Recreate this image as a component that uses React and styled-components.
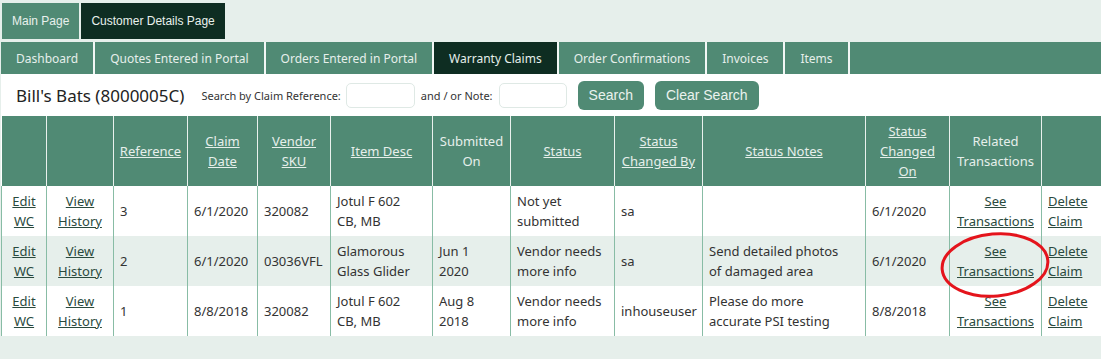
import React from 'react';
import styled, { createGlobalStyle } from 'styled-components';

const GlobalStyle = createGlobalStyle`
  body {
    margin: 0;
    background: #e6efeb;
    font-family: "Noto Sans", sans-serif;
    color: #333;
  }
`;

const Page = styled.div`
  padding: 3px 0 0 1px;
`;

const TopTabs = styled.div`
  display: flex;
  gap: 2px;
  padding-left: 1px;
`;

const TopTab = styled.a`
  display: flex;
  align-items: center;
  height: 36px;
  padding: 0 10px;
  font-family: "Liberation Sans", Arial, sans-serif;
  font-size: 12px;
  color: #e9f1ed;
  text-decoration: none;
  background: ${({ $active }) => ($active ? '#0e2d22' : '#508a74')};
`;

const NavBar = styled.div`
  display: flex;
  height: 32px;
  margin-top: 3px;
  background: #508a74;
`;

const NavTab = styled.a`
  display: flex;
  align-items: center;
  padding: 0 15px;
  border-right: 2px solid #f2f7f5;
  font-size: 12px;
  color: #e6efeb;
  text-decoration: none;
  background: ${({ $active }) => ($active ? '#0e2d22' : 'transparent')};
`;

const Content = styled.div`
  background: #fff;
`;

const SearchRow = styled.div`
  display: flex;
  align-items: center;
  height: 42px;
  padding-left: 15px;
`;

const Title = styled.h4`
  margin: 0 17px 0 0;
  font-size: 17px;
  font-weight: 400;
  color: #222;
`;

const Label = styled.span`
  font-size: 11px;
  color: #333;
  margin-left: ${({ $gap }) => $gap || 0}px;
`;

const Input = styled.input`
  box-sizing: border-box;
  width: ${({ $w }) => $w}px;
  height: 25px;
  margin-left: ${({ $gap }) => $gap}px;
  border: 1px solid #dfe9e5;
  border-radius: 5px;
  background: #fff;
  outline: none;
`;

const Button = styled.button`
  height: 29px;
  margin-left: 11px;
  padding: 0 11px;
  border: none;
  border-radius: 6px;
  background: #508a74;
  color: #eaf2ee;
  font-family: "Liberation Sans", Arial, sans-serif;
  font-size: 14px;
`;

const TableWrap = styled.div`
  position: relative;
`;

const Table = styled.table`
  width: 1099px;
  table-layout: fixed;
  border-collapse: collapse;
  font-size: 13px;
  line-height: 20px;
`;

const Th = styled.th`
  padding: 5px 5px;
  background: #508a74;
  color: #e6efeb;
  font-weight: 400;
  text-align: center;
  vertical-align: middle;
  border-left: 1px solid #e9f1ed;
  &:first-child {
    border-left: none;
  }
`;

const HeadLink = styled.a`
  color: #e6efeb;
  text-decoration: underline;
`;

const Row = styled.tr`
  background: ${({ $alt }) => ($alt ? '#e6efeb' : '#fff')};
`;

const Td = styled.td`
  padding: 5px 6px;
  height: 40px;
  vertical-align: middle;
  text-align: ${({ $center }) => ($center ? 'center' : 'left')};
  white-space: pre-line;
  border-left: 1px solid #88bca5;
  color: #333;
`;

const CellLink = styled.a`
  color: #2a4a3e;
  text-decoration: underline;
`;

const Annotation = styled.svg`
  position: absolute;
  left: 936px;
  top: 114px;
  pointer-events: none;
`;

const columns = [
  { w: 45 },
  { w: 67 },
  { w: 74, label: 'Reference', link: true },
  { w: 70, label: 'Claim Date', link: true },
  { w: 73, label: 'Vendor SKU', link: true },
  { w: 102, label: 'Item Desc', link: true },
  { w: 78, label: 'Submitted On' },
  { w: 104, label: 'Status', link: true },
  { w: 88, label: 'Status Changed By', link: true },
  { w: 163, label: 'Status Notes', link: true },
  { w: 84, label: 'Status Changed On', link: true },
  { w: 92, label: 'Related Transactions' },
  { w: 59 },
];

const claims = [
  { ref: '3', date: '6/1/2020', sku: '320082', desc: 'Jotul F 602\nCB, MB', submitted: '', status: 'Not yet\nsubmitted', by: 'sa', notes: '', changed: '6/1/2020' },
  { ref: '2', date: '6/1/2020', sku: '03036VFL', desc: 'Glamorous\nGlass Glider', submitted: 'Jun 1\n2020', status: 'Vendor needs\nmore info', by: 'sa', notes: 'Send detailed photos\nof damaged area', changed: '6/1/2020' },
  { ref: '1', date: '8/8/2018', sku: '320082', desc: 'Jotul F 602\nCB, MB', submitted: 'Aug 8\n2018', status: 'Vendor needs\nmore info', by: 'inhouseuser', notes: 'Please do more\naccurate PSI testing', changed: '8/8/2018' },
];

const navItems = ['Dashboard', 'Quotes Entered in Portal', 'Orders Entered in Portal', 'Warranty Claims', 'Order Confirmations', 'Invoices', 'Items'];

const App = () => (
  <>
    <GlobalStyle />
    <Page>
      <TopTabs>
        <TopTab href="#">Main Page</TopTab>
        <TopTab href="#" $active>Customer Details Page</TopTab>
      </TopTabs>
      <NavBar>
        {navItems.map(item => (
          <NavTab key={item} href="#" $active={item === 'Warranty Claims'}>{item}</NavTab>
        ))}
      </NavBar>
      <Content>
        <SearchRow>
          <Title>Bill's Bats (8000005C)</Title>
          <Label>Search by Claim Reference:</Label>
          <Input $w={69} $gap={5} />
          <Label $gap={6}>and / or Note:</Label>
          <Input $w={68} $gap={6} />
          <Button>Search</Button>
          <Button>Clear Search</Button>
        </SearchRow>
        <TableWrap>
          <Table>
            <colgroup>
              {columns.map((c, i) => <col key={i} style={{ width: c.w }} />)}
            </colgroup>
            <thead>
              <tr>
                {columns.map((c, i) => (
                  <Th key={i}>{c.link ? <HeadLink href="#">{c.label}</HeadLink> : c.label}</Th>
                ))}
              </tr>
            </thead>
            <tbody>
              {claims.map((c, i) => (
                <Row key={c.ref} $alt={i === 1}>
                  <Td $center><CellLink href="#">{'Edit\nWC'}</CellLink></Td>
                  <Td $center><CellLink href="#">{'View\nHistory'}</CellLink></Td>
                  <Td>{c.ref}</Td>
                  <Td>{c.date}</Td>
                  <Td>{c.sku}</Td>
                  <Td>{c.desc}</Td>
                  <Td>{c.submitted}</Td>
                  <Td>{c.status}</Td>
                  <Td>{c.by}</Td>
                  <Td>{c.notes}</Td>
                  <Td>{c.changed}</Td>
                  <Td $center><CellLink href="#">{'See\nTransactions'}</CellLink></Td>
                  <Td><CellLink href="#">{'Delete\nClaim'}</CellLink></Td>
                </Row>
              ))}
            </tbody>
          </Table>
          <Annotation width="116" height="72" viewBox="0 0 116 72">
            <ellipse cx="58" cy="35" rx="53" ry="31" fill="none" stroke="#e4141c" strokeWidth="3" transform="rotate(-5 58 35)" />
          </Annotation>
        </TableWrap>
      </Content>
    </Page>
  </>
);

export default App;
